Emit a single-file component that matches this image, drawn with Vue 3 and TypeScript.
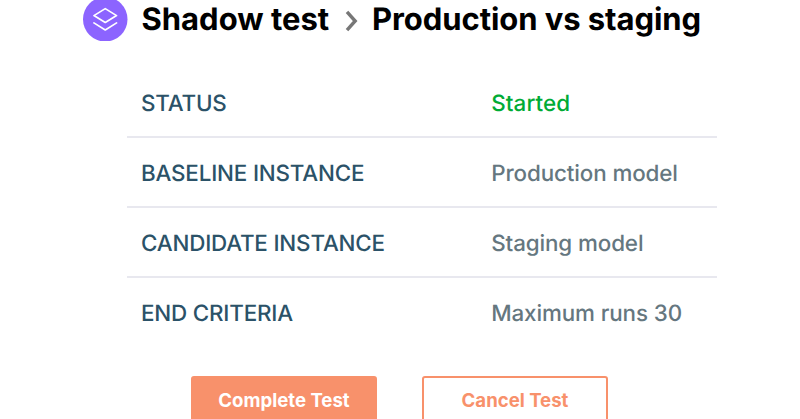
<script setup lang="ts">
type Row = {
    label: string
    value: string
    started?: boolean
}

const rows: Row[] = [
    { label: 'STATUS', value: 'Started', started: true },
    { label: 'BASELINE INSTANCE', value: 'Production model' },
    { label: 'CANDIDATE INSTANCE', value: 'Staging model' },
    { label: 'END CRITERIA', value: 'Maximum runs 30' },
]
</script>



<template>
    <main id="shadow-test">
        <header>
            <svg class="logo" viewBox="0 0 44 44">
                <circle cx="22" cy="22" r="22" />
                <path d="M10.8 18.4 22 11.5 33.2 18.4 22 25.2Z" />
                <path d="M10.8 25.6 22 32.6 33.2 25.6" />
            </svg>
            <h1 class="section">Shadow test</h1>
            <svg class="chevron" viewBox="0 0 14 22">
                <path d="M2 1.8 10.2 11 2 20.2" />
            </svg>
            <h1 class="name">Production vs staging</h1>
        </header>

        <dl>
            <div v-for="row in rows" :key="row.label" class="row">
                <dt>{{ row.label }}</dt>
                <dd :class="{ started: row.started }">{{ row.value }}</dd>
            </div>
        </dl>

        <div id="actions">
            <button class="complete">Complete Test</button>
            <button class="cancel">Cancel Test</button>
        </div>
    </main>
</template>



<style>
body {
    margin: 0;
    background-color: #fff;
}
</style>

<style scoped>
#shadow-test {
    box-sizing: border-box;
    width: 800px;
    height: 419px;
    overflow: hidden;
    font-family: Inter, "Liberation Sans", sans-serif;
    text-rendering: geometricPrecision;
}

header {
    height: 68px;
    margin-top: -15px;
    padding-left: 83px;
    display: flex;
    align-items: center;
    white-space: nowrap;
}

.logo {
    width: 44.5px;
    height: 44.5px;
    margin-right: 14px;
    flex: none;

    circle {
        fill: #8c64ff;
    }

    path {
        fill: none;
        stroke: #fff;
        stroke-width: 1.7;
        stroke-linecap: round;
        stroke-linejoin: round;
    }
}

h1 {
    margin: 0;
    padding-top: 2px;
    color: #000;
    font-size: 31px;
    font-weight: 700;
    line-height: 40px;
}

.section {
    width: 203.5px;
}

.name {
    letter-spacing: -0.07px;
}

.chevron {
    width: 14px;
    height: 22px;
    margin: 4px 13px 0 0;
    flex: none;

    path {
        fill: none;
        stroke: #777;
        stroke-width: 3.4;
    }
}

dl {
    width: 590px;
    margin: 15px 0 0 127px;
}

.row {
    box-sizing: border-box;
    height: 70px;
    padding: 2px 0 0 14px;
    display: grid;
    grid-template-columns: 350.2px 1fr;
    align-items: center;
    border-bottom: 2px solid #e8e8ef;
    color: #2b5268;
    font-size: 22.4px;
    font-weight: 450;

    &:last-child {
        border-bottom-color: transparent;
    }
}

dt {
    letter-spacing: -0.19px;
}

dd {
    margin: 0;
    color: #65777f;
    letter-spacing: -0.12px;

    &.started {
        color: #00ab35;
        font-weight: 500;
        letter-spacing: 0.1px;
    }
}

#actions {
    margin: 28px 0 0 191px;
    display: flex;
    gap: 45px;
}

button {
    box-sizing: border-box;
    width: 186px;
    height: 50px;
    padding: 0 0 2px;
    border: 2px solid #f8916b;
    border-radius: 3px;
    font-family: inherit;
    font-size: 18.6px;
    font-weight: 700;
    cursor: pointer;
}

.complete {
    background-color: #f8916b;
    color: #fff;
}

.cancel {
    background-color: #fff;
    color: #f8916b;
}
</style>
